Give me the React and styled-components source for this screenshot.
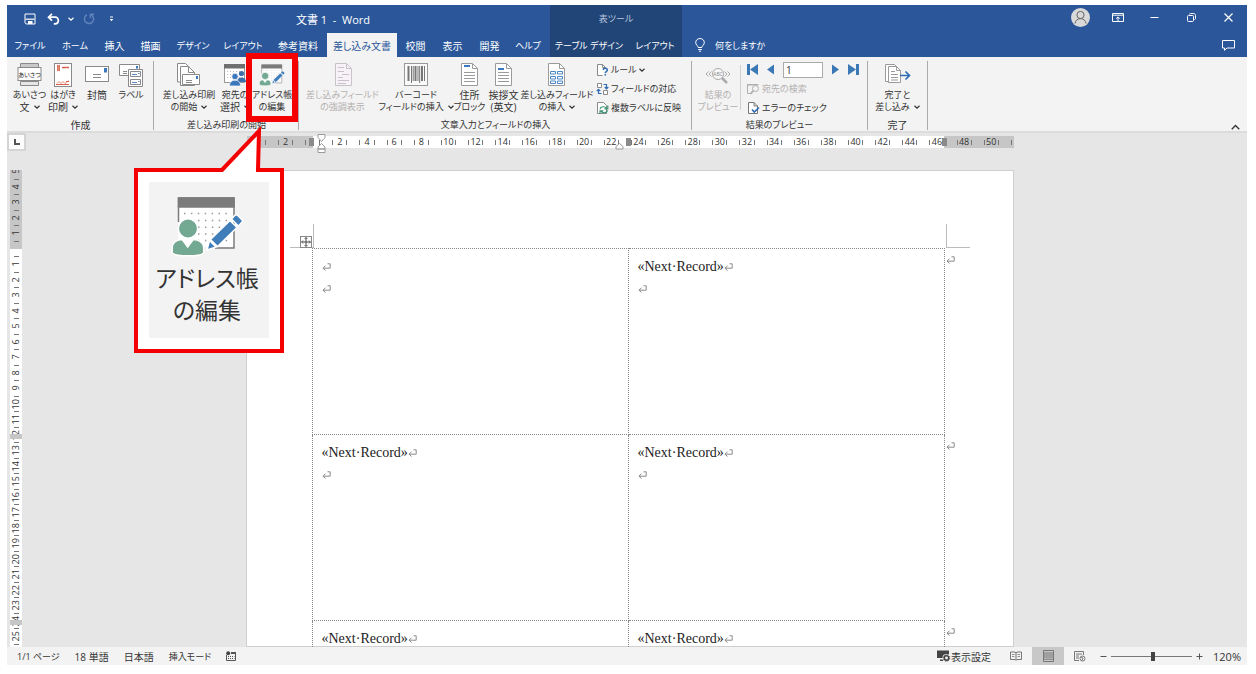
import React from 'react';
import styled, { createGlobalStyle, css } from "styled-components";

const TABS = [
  { name: 'ファイル', width: 46 },
  { name: 'ホーム', width: 44 },
  { name: '挿入', width: 35 },
  { name: '描画', width: 37 },
  { name: 'デザイン', width: 48 },
  { name: 'レイアウト', width: 52 },
  { name: '参考資料', width: 58 },
  { name: '差し込み文書', width: 70 },
  { name: '校閲', width: 37 },
  { name: '表示', width: 37 },
  { name: '開発', width: 37 },
  { name: 'ヘルプ', width: 40 },
];

const RULER_NUMBERS = [2, '', 2, 4, 6, 8, 10, 12, 14, 16, 18, 20, 22, 24, 26, 28, 30, 32, 34, 36, 38, 40, 42, 44, 46, 48, 50];
const SIDE_NUMBERS = [5, 4, 3, 2, 1, '', 1, 2, 3, 4, 5, 6, 7, 8, 9, 10, 11, 12, 13, 14, 15, 16, 17, 18, 19, 20, 21, 22, 23, 24, 25];

const LABEL_ROWS = [
  [false, true],
  [true, true],
  [true, true],
];

// labels with kana are set one step smaller than kanji-only ones
const hasKana = (text) => /[ぁ-ヶー]/.test(text);

export default function App(){

  const [tab, setTab] = React.useState('差し込み文書');
  const [record, setRecord] = React.useState('1');
  const [zoom, setZoom] = React.useState(120);

  return(
    <Window>
      <GlobalStyle/>
      <Header>
        <MainHead>
          <TitleRow>
            <QuickAccess>
              <IconBtn aria-label="上書き保存" $width={23}><SaveIcon/></IconBtn>
              <IconBtn aria-label="元に戻す" $width={24}><UndoIcon/></IconBtn>
              <IconBtn aria-label="元に戻す一覧" $width={12}><Chevron/></IconBtn>
              <IconBtn aria-label="繰り返し" $width={23}><RedoIcon/></IconBtn>
              <IconBtn aria-label="クイック アクセスのカスタマイズ" $width={23}><CustomizeIcon/></IconBtn>
            </QuickAccess>
            <Title>文書 1 &nbsp;-&nbsp; Word</Title>
          </TitleRow>
          <TabRow>
            {TABS.map(({name, width}) => (
              <Tab key={name} $width={width} $kana={hasKana(name) && tab !== name} $active={tab === name} onClick={() => setTab(name)}>{name}</Tab>
            ))}
          </TabRow>
        </MainHead>
        <ContextHead>
          <ContextTitle>表ツール</ContextTitle>
          <ContextTabs>
            <Tab $width={78} $kana>テーブル デザイン</Tab>
            <Tab $width={54} $kana>レイアウト</Tab>
          </ContextTabs>
        </ContextHead>
        <EndHead>
          <WindowControls>
            <IconBtn aria-label="アカウント" $width={37}><AvatarIcon/></IconBtn>
            <IconBtn aria-label="リボンの表示オプション" $width={37}><RibbonOptionIcon/></IconBtn>
            <IconBtn aria-label="最小化" $width={37}><MinimizeIcon/></IconBtn>
            <IconBtn aria-label="元に戻す (縮小)" $width={37}><RestoreIcon/></IconBtn>
            <IconBtn aria-label="閉じる" $width={37}><CloseIcon/></IconBtn>
          </WindowControls>
          <HelpRow>
            <TellMe><BulbIcon/>何をしますか</TellMe>
            <IconBtn aria-label="コメント" $width={37}><CommentIcon/></IconBtn>
          </HelpRow>
        </EndHead>
      </Header>

      <Ribbon>
        <Group name="作成" $width={147} $pad={6}>
          <BigButton width={33} icon={<GreetingIcon/>} lines={['あいさつ', '文']} menu/>
          <BigButton width={34} icon={<PostcardIcon/>} lines={['はがき', '印刷']} menu/>
          <BigButton width={34} icon={<EnvelopeIcon/>} lines={['封筒']}/>
          <BigButton width={34} icon={<LabelIcon/>} lines={['ラベル']}/>
        </Group>
        <Group name="差し込み印刷の開始" $width={145} $pad={6}>
          <BigButton width={58} icon={<MergeStartIcon/>} lines={['差し込み印刷', 'の開始']} menu/>
          <BigButton width={34} icon={<RecipientsIcon/>} lines={['宛先の', '選択']} menu/>
          <Marked>
            <BigButton width={40} icon={<AddressBookIcon size={26}/>} lines={['アドレス帳', 'の編集']}/>
          </Marked>
        </Group>
        <Group name="文章入力とフィールドの挿入" $width={393} $pad={6}>
          <BigButton width={75} icon={<HighlightIcon/>} lines={['差し込みフィールド', 'の強調表示']} disabled/>
          <BigButton width={72} icon={<BarcodeIcon/>} lines={['バーコード', 'フィールドの挿入']} menu/>
          <BigButton width={35} icon={<AddressBlockIcon top={1}/>} lines={['住所', 'ブロック']}/>
          <BigButton width={33} icon={<AddressBlockIcon top={4}/>} lines={['挨拶文', '(英文)']}/>
          <BigButton width={74} icon={<InsertFieldIcon/>} lines={['差し込みフィールド', 'の挿入']} menu/>
          <Stack>
            <SmallButton><RuleIcon/>ルール<Chevron/></SmallButton>
            <SmallButton><MatchIcon/>フィールドの対応</SmallButton>
            <SmallButton><UpdateIcon/>複数ラベルに反映</SmallButton>
          </Stack>
        </Group>
        <Group name="結果のプレビュー" $width={176} $pad={5}>
          <BigButton width={42} icon={<PreviewIcon/>} lines={['結果の', 'プレビュー']} disabled/>
          <Divider/>
          <Stack>
            <RecordNav>
              <button aria-label="最初のレコード"><NavIcon kind="first"/></button>
              <button aria-label="前のレコード"><NavIcon kind="prev"/></button>
              <RecordInput aria-label="レコード" value={record} onChange={(e) => setRecord(e.target.value)}/>
              <button aria-label="次のレコード"><NavIcon kind="next"/></button>
              <button aria-label="最後のレコード"><NavIcon kind="last"/></button>
            </RecordNav>
            <SmallButton disabled><FindIcon/>宛先の検索</SmallButton>
            <SmallButton><CheckIcon/>エラーのチェック</SmallButton>
          </Stack>
        </Group>
        <Group name="完了" $width={60} $pad={5}>
          <BigButton width={49} icon={<FinishIcon/>} lines={['完了と', '差し込み']} menu/>
        </Group>
        <CollapseBtn aria-label="リボンを折りたたむ"><Chevron up large/></CollapseBtn>
      </Ribbon>

      <RulerRow>
        <TabSelector aria-label="タブの種類"><TabStopIcon/></TabSelector>
        <RulerTrack>
          <Ruler>
            {RULER_NUMBERS.map((n, i) => <RulerCell key={i}>{n}</RulerCell>)}
            <RulerTick $left={18}/>
            <RulerTick $left={764}/>
            <ColumnMark $left={62}/>
            <ColumnMark $left={379}/>
            <ColumnMark $left={695}/>
            <IndentMark $left={70}><IndentIcon/></IndentMark>
            <IndentMark $left={368}><RightIndentIcon/></IndentMark>
          </Ruler>
        </RulerTrack>
      </RulerRow>

      <Workspace>
        <SideRuler>
          <SideNumbers>
            {SIDE_NUMBERS.map((n, i) => <SideCell key={i}><span>{n}</span></SideCell>)}
          </SideNumbers>
          <RowMark $top={264}/>
          <RowMark $top={450}/>
        </SideRuler>
        <Canvas>
          <Paper>
            <CropLeft/>
            <CropRight/>
            <MoveHandle aria-label="表の移動ハンドル"><MoveIcon/></MoveHandle>
            <LabelTable>
              <tbody>
                {LABEL_ROWS.map((row, i) => (
                  <tr key={i}>
                    {row.map((next, j) => (
                      <LabelCell key={j}>
                        <Line>{next && '«Next·Record»'}<ReturnIcon/></Line>
                        <Line><ReturnIcon/></Line>
                      </LabelCell>
                    ))}
                    <EndCell><ReturnIcon/></EndCell>
                  </tr>
                ))}
              </tbody>
            </LabelTable>
          </Paper>
        </Canvas>
      </Workspace>

      <StatusBar>
        <StatusGroup>
          <StatusBtn $kana>1/1 ページ</StatusBtn>
          <StatusBtn>18 単語</StatusBtn>
          <StatusBtn>日本語</StatusBtn>
          <StatusBtn $kana>挿入モード</StatusBtn>
          <StatusBtn aria-label="マクロの記録"><MacroIcon/></StatusBtn>
        </StatusGroup>
        <ViewGroup>
          <DisplayBtn><DisplayIcon/>表示設定</DisplayBtn>
          <ViewBtn aria-label="閲覧モード"><ReadIcon/></ViewBtn>
          <ViewBtn aria-label="印刷レイアウト" $active><PrintIcon/></ViewBtn>
          <ViewBtn aria-label="Web レイアウト"><WebIcon/></ViewBtn>
          <ZoomBtn aria-label="縮小" onClick={() => setZoom(zoom - 10)}><ZoomSign/></ZoomBtn>
          <ZoomSlider aria-label="ズーム" min="10" max="220" value={zoom} onChange={(e) => setZoom(Number(e.target.value))}/>
          <ZoomBtn aria-label="拡大" onClick={() => setZoom(zoom + 10)}><ZoomSign plus/></ZoomBtn>
          <ZoomValue>{zoom}%</ZoomValue>
        </ViewGroup>
      </StatusBar>

      <Callout>
        <CalloutPointer/>
        <CalloutPanel>
          <AddressBookIcon size={72}/>
          <div>アドレス帳<br/>の編集</div>
        </CalloutPanel>
      </Callout>
    </Window>
  )
}

function Group({name, children, ...rest}){
  return(
    <GroupBox {...rest}>
      <GroupBody>{children}</GroupBody>
      <GroupName $kana={hasKana(name)}>{name}</GroupName>
    </GroupBox>
  )
}

function BigButton({width, icon, lines, menu, disabled}){
  return(
    <BigBtn $width={width} disabled={disabled}>
      <IconBox>{icon}</IconBox>
      {lines.map((line, i) => (
        <BtnLine key={line} $kana={hasKana(line)}>{line}{menu && i === lines.length - 1 && <Chevron/>}</BtnLine>
      ))}
    </BigBtn>
  )
}

/* icons */

function Chevron({up, large}){
  return(
    <svg width={large ? 9 : 6} height={large ? 6 : 4} viewBox="0 0 6 4" fill="none" stroke="currentColor" strokeWidth={large ? 0.9 : 1.2}>
      <path d={up ? "M0.5 3.5 3 1 5.5 3.5" : "M0.5 0.7 3 3.1 5.5 0.7"}/>
    </svg>
  )
}

function SaveIcon(){
  return(
    <svg width="12" height="12" viewBox="0 0 12 12" fill="none" stroke="#fff">
      <path d="M1 1h10v10H2.2L1 9.8z"/>
      <path d="M1.5 6.2h9" strokeWidth="1.2"/>
      <path d="M4 8h4.5v3H4z" fill="#fff" stroke="none"/>
    </svg>
  )
}

function UndoIcon(){
  return(
    <svg width="13" height="12" viewBox="0 0 13 12" fill="none" stroke="#fff" strokeWidth="1.7">
      <path d="M5 0.8 1.5 4.2 5 7.6"/>
      <path d="M1.8 4.2h6.4c4.2 0 4.2 6.3 0 6.6H6.8"/>
    </svg>
  )
}

function RedoIcon(){
  return(
    <svg width="12" height="12" viewBox="0 0 12 12" fill="none" stroke="#5f82bb" strokeWidth="1.5">
      <path d="M4 1.8A4.6 4.6 0 1 0 8.2 1.9"/>
      <path d="M7.4 5V1.2h3.8"/>
    </svg>
  )
}

function CustomizeIcon(){
  return(
    <svg width="5" height="6" viewBox="0 0 5 6" fill="#fff">
      <path d="M1 0.5h3v1H1zM0.7 3h3.6L2.5 5.2z"/>
    </svg>
  )
}

function AvatarIcon(){
  return(
    <svg width="19" height="19" viewBox="0 0 19 19" fill="none" stroke="#666">
      <circle cx="9.5" cy="9.5" r="9.5" fill="#d9d9d9" stroke="none"/>
      <circle cx="9.5" cy="7" r="3.6"/>
      <path d="M4 15.5c.4-3 2.6-4.9 5.5-4.9s5.1 1.900 5.500 4.900"/>
    </svg>
  )
}

function RibbonOptionIcon(){
  return(
    <svg width="12" height="9" viewBox="0 0 12 9" fill="none" stroke="#fff">
      <path d="M0.5 0.5h11v8H0.5zM0.5 2.2h11"/>
      <path d="M6 8V4M4.2 5.7 6 3.9l1.8 1.8"/>
    </svg>
  )
}

function MinimizeIcon(){
  return <svg width="9" height="9" viewBox="0 0 9 9"><path d="M0.5 4.5h8" stroke="#fff"/></svg>
}

function RestoreIcon(){
  return(
    <svg width="9" height="9" viewBox="0 0 9 9" fill="none" stroke="#fff">
      <rect x="0.5" y="2.5" width="6" height="6" rx="1"/>
      <path d="M2.5 1.5c0-.7.4-1 1-1h3c1.3 0 2 .7 2 2v3c0 .6-.3 1-1 1"/>
    </svg>
  )
}

function CloseIcon(){
  return <svg width="9" height="9" viewBox="0 0 9 9"><path d="M0.5 0.5l8 8M8.5 0.5l-8 8" stroke="#fff" strokeWidth="1.2"/></svg>
}

function BulbIcon(){
  return(
    <svg width="10" height="14" viewBox="0 0 10 14" fill="none" stroke="#fff">
      <path d="M3.2 9.5C3.2 7.5.7 7.2.7 4.5a4.3 4 0 0 1 8.6 0c0 2.7-2.5 3-2.5 5z"/>
      <path d="M3.2 11.5h3.6M4 13.2h2"/>
    </svg>
  )
}

function CommentIcon(){
  return(
    <svg width="13" height="11" viewBox="0 0 13 11" fill="none" stroke="#fff">
      <path d="M0.5 0.5h12V8H5l-2.5 2.3V8h-2z"/>
    </svg>
  )
}

function GreetingIcon(){
  return(
    <svg width="26" height="26" viewBox="0 0 26 26">
      <path d="M3.5 1.5h18v4h-18z" fill="#c9c9c9" stroke="#8a8a8a"/>
      <path d="M3.5 19.5h18v4h-18z" fill="#e6e6e6" stroke="#8a8a8a"/>
      <rect x="1" y="5.5" width="23" height="13" fill="#fff" stroke="#8a8a8a"/>
      <text x="12.5" y="14.5" fontSize="6" textAnchor="middle" fill="#222">あいさつ</text>
    </svg>
  )
}

function PostcardIcon(){
  return(
    <svg width="26" height="26" viewBox="0 0 26 26" fill="none">
      <rect x="4.5" y="1.5" width="17" height="23" fill="#fff" stroke="#8a8a8a"/>
      <path d="M7 3l3 2-3 2 3 2M10 3L7 5l3 2-3 2" stroke="#d8604a"/>
      <path d="M12 5.5h7" stroke="#d8604a" strokeWidth="1.5"/>
      <path d="M7 21.500l2-2 2 2 2-2 2 2 3.500-3" stroke="#e8836f"/>
      <path d="M6 22.500h13M16 19.500h3" stroke="#d8604a"/>
    </svg>
  )
}

function EnvelopeIcon(){
  return(
    <svg width="26" height="26" viewBox="0 0 26 26" fill="none">
      <rect x="1.5" y="4.5" width="23" height="15" fill="#fff" stroke="#8a8a8a"/>
      <path d="M20 6h3v4.500h-3z" fill="#3b78bd"/>
      <path d="M9 12.500h8M9 15.500h8" stroke="#8a8a8a"/>
    </svg>
  )
}

function LabelIcon(){
  return(
    <svg width="26" height="26" viewBox="0 0 26 26" fill="none" stroke="#8a8a8a">
      <path d="M1.500 2.500h20v11h-20z" fill="#fff"/>
      <path d="M18 4h2v2.500h-2z" fill="#3b78bd" stroke="none"/>
      <path d="M5 9.500h4M5 11.500h4"/>
      <path d="M10.500 7.500h14v17h-14z" fill="#fff"/>
      <path d="M12.500 9.500h10v5h-10zM12.500 17.500h10v5h-10z" fill="#fff"/>
      <path d="M14 12.500h5M14 20.500h5M20 11.500h1.500M20 19.500h1.500" stroke="#5b8fc9"/>
    </svg>
  )
}

function MergeStartIcon(){
  return(
    <svg width="26" height="26" viewBox="0 0 26 26" fill="none" stroke="#8a8a8a">
      <path d="M1.500 1.500h8l5 5V20h-13z" fill="#fff"/>
      <path d="M4.500 4.500h8l6 6v13h-14z" fill="#fff"/>
      <path d="M12.500 4.500v6h6"/>
      <path d="M6.500 12.500h17v10h-17z" fill="#fff"/>
      <path d="M20 14h2v3h-2z" fill="#3b78bd" stroke="none"/>
      <path d="M10 18.500h6M10 20.500h6"/>
    </svg>
  )
}

function RecipientsIcon(){
  return(
    <svg width="26" height="26" viewBox="0 0 26 26" fill="none">
      <rect x="2.500" y="2.500" width="20" height="18" fill="#fff" stroke="#9a9a9a"/>
      <path d="M2 2h21v4.500H2z" fill="#6f6f6f"/>
      <path d="M5 9.500h16M5 12.500h16M5 15.500h16" stroke="#bbb" strokeDasharray="1 2"/>
      <circle cx="19.500" cy="11.500" r="2.600" fill="#3d6fa8"/>
      <path d="M15 20c0-3 2-4.500 4.500-4.500S24 17 24 20z" fill="#3d6fa8"/>
      <g fill="#3b78bd" stroke="#f3f3f3" strokeWidth=".8">
        <circle cx="13" cy="14.500" r="3.200"/>
        <path d="M7.500 24c0-4 2.500-5.800 5.500-5.800s5.500 1.800 5.500 5.800z"/>
      </g>
    </svg>
  )
}

function AddressBookIcon({size}){
  return(
    <svg width={size} height={size} viewBox="0 0 72 72" fill="none">
      <path d="M7.5 8h56v49h-56z" fill="#fff"/>
      <path d="M7.5 32V8H63v50H44" stroke="#7b7b7b" strokeWidth="1.5"/>
      <path d="M6.800 7.200h57v10.500h-57z" fill="#7b7b7b"/>
      <path d="M13 23.500h46M27 30.500h32M27 37.300h32M27 44h32M27 50.500h32" stroke="#9a9a9a" strokeWidth="1.500" strokeDasharray="1.500 5.400"/>
      <g fill="#73a892" stroke="#fff" strokeWidth="1.500">
        <circle cx="17" cy="38.500" r="9.700"/>
        <path d="M1.200 63V58c0-5.500 4.500-8.500 10-8.500l5.500 7.500 5.500-7.500c5.500 0 10.500 3 10.500 8.500v5c-4 3.800-27 3.800-31.500 0z"/>
      </g>
      <g fill="#417db8" stroke="#fff" strokeWidth="1.500">
        <path d="M36 60l2.500-9.500 6.500 6.500z"/>
        <path d="M39.500 49.500 59 30.500l7 7-19.500 19z"/>
        <path d="M60.500 29l3.200-3.500c1-1 2-1 3 0l4 4c1 1 1 2 0 3L67.300 36z"/>
      </g>
    </svg>
  )
}

function HighlightIcon(){
  return(
    <svg width="26" height="26" viewBox="0 0 26 26" fill="none" stroke="#c9c2c9">
      <path d="M5.500 1.500h11l5 5v17h-16z" fill="#f7f2f7"/>
      <path d="M16.500 1.500v5h5M8 5.500h6M8 9.500h6M12 12.500h7M8 15.500h5M8 18.500h11M8 21.500h8"/>
    </svg>
  )
}

function BarcodeIcon(){
  return(
    <svg width="26" height="26" viewBox="0 0 26 26" fill="none" stroke="#777">
      <rect x="1.500" y="1.500" width="23" height="22" fill="#fafafa" stroke="#999"/>
      <path d="M5.500 4v15M12.500 4v15M19 4v15" strokeWidth="2"/>
      <path d="M8.500 4v17M10.200 4v15M15 4v15M16.700 4v17M21.500 4v15"/>
    </svg>
  )
}

function AddressBlockIcon({top}){
  return(
    <svg width="26" height="26" viewBox="0 0 26 26" fill="none" stroke="#9a9a9a">
      <path d="M4.500 1.500h11l5 5v17h-16z" fill="#fff"/>
      <path d="M15.500 1.500v5h5M7 10.500h11M7 13.500h11M7 16.500h11M7 19.500h11"/>
      <path d={`M7 ${top + 3}h6`} stroke="#3b78bd" strokeWidth="2"/>
    </svg>
  )
}

function InsertFieldIcon(){
  return(
    <svg width="26" height="26" viewBox="0 0 26 26" fill="none" stroke="#9a9a9a">
      <path d="M4.500 1.500h11l5 5v17h-16z" fill="#fff"/>
      <path d="M15.500 1.500v5h5"/>
      <path d="M6.500 9.500h5v2.500h-5zM13.500 9.500h5v2.500h-5zM6.500 14.500h5V17h-5zM13.500 14.500h5V17h-5zM6.500 19h5v2.500h-5zM13.500 19h5v2.500h-5z" stroke="#4a86c5"/>
    </svg>
  )
}

function RuleIcon(){
  return(
    <svg width="13" height="14" viewBox="0 0 13 14" fill="none" stroke="#8a8a8a">
      <path d="M6.500 12.500h-5V1.500h5l3 3" fill="#fff"/>
      <path d="M6.500 1.500v3h3"/>
      <path d="M7.300 7c0-2.400 4-2.200 4 0 0 1.600-2 1.600-2 3M9.300 11v1.600" stroke="#2f6db5" strokeWidth="1.500"/>
    </svg>
  )
}

function MatchIcon(){
  return(
    <svg width="13" height="14" viewBox="0 0 13 14" fill="none" stroke="#8a8a8a">
      <path d="M1.500 1.500h4v4h-4zM7.500 8.500h4v4h-4z" fill="#fff"/>
      <path d="M7.500 2.500h3v4M8.700 5l1.800 1.800L12.300 5M5.500 11.500h-3v-4M.7 9.200l1.800-1.800 1.800 1.800" stroke="#2f6db5" strokeWidth="1.200"/>
    </svg>
  )
}

function UpdateIcon(){
  return(
    <svg width="13" height="14" viewBox="0 0 13 14" fill="none" stroke="#8a8a8a">
      <path d="M1.500 1.500h6l3 3v8h-9z" fill="#fff"/>
      <path d="M4 8.200c.5-3 5-3.200 6.500-.8M11.800 4.500v3.300H8.500M11.500 9.500c-.8 2.800-5 3-6.500.6M4 13V9.800h3.300" stroke="#3f9270" strokeWidth="1.200"/>
    </svg>
  )
}

function PreviewIcon(){
  return(
    <svg width="26" height="26" viewBox="0 0 26 26" fill="none" stroke="#aaa">
      <circle cx="13" cy="12" r="5.500" fill="#f7f7f7"/>
      <path d="M17 16l5 5" strokeWidth="2.500"/>
      <path d="M3.500 9.500 1 12l2.500 2.500M6.500 9.500 4 12l2.500 2.500M19.500 9.500 22 12l-2.500 2.500M22.500 9.500 25 12l-2.500 2.500"/>
      <text x="13" y="14" fontSize="5" textAnchor="middle" fill="#888" stroke="none">ABC</text>
    </svg>
  )
}

function NavIcon({kind}){
  const paths = {
    first: "M0 0h3v11H0zM11 0v11L3 5.5z",
    prev: "M9 0.5v10L2 5.5z",
    next: "M2 0.5v10L9 5.5z",
    last: "M0 0l8 5.5L0 11zM8 0h3v11H8z",
  };
  return <svg width="11" height="11" viewBox="0 0 11 11" fill="#3b78b5"><path d={paths[kind]}/></svg>
}

function FindIcon(){
  return(
    <svg width="13" height="14" viewBox="0 0 13 14" fill="none" stroke="#b0b0b0">
      <path d="M4 11.500H0.500v-9h11"/>
      <path d="M0 2h11v1.500H0z" fill="#b0b0b0" stroke="none"/>
      <circle cx="8.500" cy="6.500" r="3"/>
      <path d="M6.300 8.700 3.500 12" strokeWidth="1.800"/>
    </svg>
  )
}

function CheckIcon(){
  return(
    <svg width="13" height="14" viewBox="0 0 13 14" fill="none" stroke="#777">
      <path d="M1.500 1.500H7L10.500 5v7.500h-9z" fill="#fff"/>
      <path d="M7 1.500V5h3.500"/>
      <path d="M5 8.500 7.300 11 12 6.500" stroke="#2f6db5" strokeWidth="1.700"/>
    </svg>
  )
}

function FinishIcon(){
  return(
    <svg width="26" height="26" viewBox="0 0 26 26" fill="none" stroke="#9a9a9a">
      <path d="M0.500 2.500h9l4 4v13h-13z" fill="#fff"/>
      <path d="M3.500 4.500h8l4 4v12h-12z" fill="#fff"/>
      <path d="M11.500 4.500v4h4M6 9.500h4M6 12.500h7M6 15.500h7M6 18h7"/>
      <path d="M15 13.500h9.500M20.500 9.500l4 4-4 4" stroke="#2f6db5" strokeWidth="1.700"/>
    </svg>
  )
}

function TabStopIcon(){
  return <svg width="6" height="6" viewBox="0 0 6 6"><path d="M1 0v5h5" fill="none" stroke="#555" strokeWidth="2"/></svg>
}

function IndentIcon(){
  return(
    <svg width="9" height="20" viewBox="0 0 9 20" fill="#fff" stroke="#999">
      <path d="M1 .5h7v3L4.500 7.500 1 3.500z"/>
      <path d="M4.500 9.500 8 13v2H1v-2zM1 15h7v3.500H1z"/>
    </svg>
  )
}

function RightIndentIcon(){
  return(
    <svg width="9" height="20" viewBox="0 0 9 20" fill="#fff" stroke="#999">
      <path d="M4.500 9.500 8 12.500V15H1v-2.500z"/>
    </svg>
  )
}

function MoveIcon(){
  return(
    <svg width="10" height="10" viewBox="0 0 10 10" fill="none" stroke="#444">
      <path d="M5 .5v9M.5 5h9"/>
      <path d="M3.500 2 5 .5 6.500 2M3.500 8 5 9.500 6.500 8M2 3.500.5 5 2 6.500M8 3.500 9.500 5 8 6.500" strokeWidth=".8"/>
    </svg>
  )
}

function ReturnIcon(){
  return(
    <svg width="9" height="8" viewBox="0 0 9 8" fill="none" stroke="#8a8a8a">
      <path d="M5.500 .8h2.700v4.400H1M3.500 2.700 1 5.200l2.500 2.300"/>
    </svg>
  )
}

function MacroIcon(){
  return(
    <svg width="10" height="10" viewBox="0 0 10 10" fill="none" stroke="#555">
      <path d="M.5 4v5.500h9V1.500h-4"/>
      <path d="M5 1h5v2H5z" fill="#555" stroke="none"/>
      <circle cx="2.200" cy="2.200" r="2" fill="#444" stroke="none"/>
      <path d="M2 5.500h6.500M2 7.500h6.500" strokeDasharray="1 1"/>
    </svg>
  )
}

function DisplayIcon(){
  return(
    <svg width="14" height="12" viewBox="0 0 14 12" fill="none">
      <path d="M0 .5h12V8H0zM3 9.500h3.500V11H3z" fill="#444"/>
      <circle cx="9.500" cy="8" r="4" fill="#f3f3f3"/>
      <circle cx="9.500" cy="8" r="2.200" stroke="#444" strokeWidth="1.500"/>
      <circle cx="9.500" cy="8" r="3.200" stroke="#444" strokeDasharray="1.300 1.200"/>
    </svg>
  )
}

function ReadIcon(){
  return(
    <svg width="12" height="10" viewBox="0 0 12 10" fill="none" stroke="#777">
      <path d="M.5 1H5l1 1 1-1h4.500v7.500H7l-1 1-1-1H.5zM6 2v7"/>
      <path d="M2 3.500h2.500M2 5.500h2.500M7.500 3.500H10M7.500 5.500H10" strokeWidth=".8"/>
    </svg>
  )
}

function PrintIcon(){
  return(
    <svg width="11" height="12" viewBox="0 0 11 12" fill="none" stroke="#777">
      <path d="M.5.5h10v11H.5zM1 3h9M1 5h9M1 7h9M1 9.200h9"/>
    </svg>
  )
}

function WebIcon(){
  return(
    <svg width="12" height="11" viewBox="0 0 12 11" fill="none" stroke="#777">
      <path d="M5 9.500H.5v-9h9V4M2 3h6M2 5h3M2 7h3"/>
      <circle cx="8.500" cy="7.500" r="2.500"/>
      <path d="M7 6l2 1-1 2.500"/>
    </svg>
  )
}

function ZoomSign({plus}){
  return(
    <svg width="7" height="7" viewBox="0 0 7 7" stroke="#555">
      <path d={plus ? "M.5 3.500h6M3.500 .5v6" : "M.5 3.500h6"}/>
    </svg>
  )
}

function CalloutPointer(){
  return(
    <PointerSvg width="52" height="48" viewBox="0 0 52 48">
      <path d="M7 48v-4L44 5l-1 39v4z" fill="#fff"/>
      <path d="M2 44h5L44 5l-1 39h7" fill="none" stroke="#f50000" strokeWidth="4"/>
    </PointerSvg>
  )
}

/* styles */

const GlobalStyle = createGlobalStyle`
  *, *::before, *::after {
    box-sizing: border-box;
  }
  body {
    margin: 0;
    background: #fff;
    font-family: "Open Sans", "Noto Sans CJK JP", sans-serif;
    font-size: 10px;
    color: #333;
  }
  button, input {
    font: inherit;
    color: inherit;
  }
  button {
    padding: 0;
    border: 0;
    background: none;
    white-space: nowrap;
    font-feature-settings: "palt";
  }
  svg {
    display: block;
    flex: none;
  }
`

const Window = styled.div`
  position: relative;
  display: flex;
  flex-direction: column;
  height: 100vh;
  padding: 5px 9px 9px 7px;
  font-feature-settings: "palt";
`

const Header = styled.header`
  display: flex;
  flex: none;
  background: #2b579a;
  color: #fff;
`

const MainHead = styled.div`
  width: 543px;
`

const TitleRow = styled.div`
  display: flex;
  align-items: center;
  height: 28px;
`

const QuickAccess = styled.div`
  display: flex;
  width: 109px;
  padding-left: 11px;
`

const IconBtn = styled.button`
  display: flex;
  align-items: center;
  justify-content: center;
  flex: none;
  width: ${({$width}) => $width}px;
  height: 24px;
`

const Title = styled.div`
  flex: 1;
  text-align: center;
  font-size: 11px;
`

const TabRow = styled.nav`
  display: flex;
  height: 24px;
`

const Tab = styled.button`
  display: flex;
  align-items: center;
  justify-content: center;
  flex: none;
  width: ${({$width}) => $width}px;
  height: 24px;
  font-size: ${({$kana}) => $kana ? 9 : 10}px;
  ${({$active}) => $active && css`
    background: #f3f3f3;
    color: #2b579a;
  `}
`

const ContextHead = styled.div`
  background: #224578;
`

const ContextTitle = styled.div`
  height: 28px;
  line-height: 27px;
  text-align: center;
  font-size: 9px;
  color: #b8c6dc;
`

const ContextTabs = styled.div`
  display: flex;
`

const EndHead = styled.div`
  flex: 1;
`

const WindowControls = styled.div`
  display: flex;
  justify-content: flex-end;
  height: 28px;
`

const HelpRow = styled.div`
  display: flex;
  justify-content: space-between;
  padding-left: 13px;
`

const TellMe = styled.button`
  display: flex;
  align-items: center;
  gap: 10px;
  font-size: 9px;
`

const Ribbon = styled.div`
  display: flex;
  flex: none;
  padding: 4px 0 1px;
  background: #f3f3f3;
`

const GroupBox = styled.section`
  display: flex;
  flex-direction: column;
  width: ${({$width}) => $width}px;
  height: 69px;
  padding-left: ${({$pad}) => $pad}px;
  padding-right: 5px;
  border-right: 1px solid #aaa;
`

const GroupBody = styled.div`
  display: flex;
  height: 59px;
`

const GroupName = styled.div`
  line-height: 10px;
  text-align: center;
  white-space: nowrap;
  font-size: ${({$kana}) => $kana ? 9 : 10}px;
`

const BigBtn = styled.button`
  display: flex;
  flex-direction: column;
  align-items: center;
  flex: none;
  width: ${({$width}) => $width}px;
  line-height: 12px;
  &:disabled {
    color: #b4b0b0;
  }
`

const IconBox = styled.span`
  height: 28px;
  padding-top: 1px;
`

const BtnLine = styled.span`
  display: flex;
  align-items: center;
  gap: 4px;
  font-size: ${({$kana}) => $kana ? 9 : 10}px;
`

const Marked = styled.div`
  position: relative;
  display: flex;
  &::after {
    content: "";
    position: absolute;
    z-index: 2;
    top: -8px;
    left: -6px;
    width: 52px;
    height: 69px;
    border: 6px solid #f50000;
    pointer-events: none;
  }
`

const Stack = styled.div`
  display: flex;
  flex-direction: column;
  gap: 2px;
  padding-left: 2px;
`

const SmallButton = styled.button`
  display: flex;
  align-items: center;
  gap: 2px;
  height: 17px;
  font-size: 9px;
  &:disabled {
    color: #b4b0b0;
  }
`

const Divider = styled.div`
  width: 1px;
  height: 45px;
  margin: 4px 4px 0 1px;
  background: #d0d0d0;
`

const RecordNav = styled.div`
  display: flex;
  align-items: center;
  gap: 7px;
  height: 17px;
`

const RecordInput = styled.input`
  width: 40px;
  height: 16px;
  padding: 0 2px;
  border: 1px solid #aaa;
  background: #fff;
`

const CollapseBtn = styled.button`
  display: flex;
  align-items: flex-end;
  margin-left: auto;
  padding: 0 7px 0;
`

const RulerRow = styled.div`
  display: flex;
  flex: none;
  height: 20px;
  border-top: 2px solid #dcdcdc;
  background: #e6e6e6;
`

const TabSelector = styled.button`
  display: flex;
  align-items: center;
  justify-content: center;
  flex: none;
  width: 19px;
  height: 18px;
  border: 2px solid #d4d4d4;
  background: #fdfdfd;
`

const RulerTrack = styled.div`
  display: flex;
  justify-content: center;
  flex: 1;
  padding: 3px 12px 0 0;
`

const Ruler = styled.div`
  position: relative;
  display: flex;
  width: 767px;
  height: 12px;
  padding: 0 9px 0 25px;
  background: linear-gradient(to right, #c6c6c6 66px, #fff 66px, #fff 697px, #c6c6c6 697px);
`

const RulerCell = styled.span`
  display: flex;
  align-items: center;
  justify-content: center;
  flex: 1;
  font-size: 9px;
  line-height: 12px;
  &::before, &::after {
    content: "";
    width: 1px;
    height: 5px;
    background: #777;
  }
  &::before {
    margin-right: auto;
    margin-left: 6px;
  }
  &::after {
    margin-left: auto;
    margin-right: 6px;
  }
`

const RulerTick = styled.span`
  position: absolute;
  top: 4px;
  left: ${({$left}) => $left}px;
  width: 1px;
  height: 5px;
  background: #777;
`

const ColumnMark = styled.span`
  position: absolute;
  top: 2px;
  left: ${({$left}) => $left}px;
  width: 5px;
  height: 8px;
  background: #8a8a8a;
`

const IndentMark = styled.span`
  position: absolute;
  top: -2px;
  left: ${({$left}) => $left}px;
`

const Workspace = styled.main`
  display: flex;
  flex: 1;
  min-height: 0;
  padding-top: 19px;
  overflow: hidden;
  background: #e6e6e6;
`

const SideRuler = styled.div`
  position: relative;
  flex: none;
  width: 12px;
  margin-left: 3px;
  overflow: hidden;
  background: linear-gradient(#c6c6c6 79px, #fff 79px);
`

const SideNumbers = styled.div`
  display: flex;
  flex-direction: column;
  height: 481px;
  margin-top: -6px;
`

const SideCell = styled.div`
  display: flex;
  flex-direction: column;
  align-items: center;
  flex: 1;
  font-size: 9px;
  line-height: 12px;
  span {
    display: flex;
    align-items: center;
    justify-content: center;
    flex: 1;
    min-height: 0;
    writing-mode: vertical-rl;
    transform: rotate(180deg);
  }
  &::after {
    content: "";
    width: 5px;
    height: 1px;
    background: #777;
  }
`

const RowMark = styled.span`
  position: absolute;
  top: ${({$top}) => $top}px;
  left: 0;
  width: 12px;
  height: 5px;
  background: #c6c6c6;
`

const Canvas = styled.div`
  display: flex;
  justify-content: center;
  flex: 1;
  padding-right: 10px;
`

const Paper = styled.article`
  position: relative;
  width: 768px;
  padding: 77px 40px 0 65px;
  border: 1px solid #cfcfcf;
  background: #fff;
`

const CropLeft = styled.span`
  position: absolute;
  top: 53px;
  left: 43px;
  width: 24px;
  height: 24px;
  border-right: 1px solid #bbb;
  border-bottom: 1px solid #bbb;
`

const CropRight = styled.span`
  position: absolute;
  top: 53px;
  left: 699px;
  width: 24px;
  height: 24px;
  border-left: 1px solid #bbb;
  border-bottom: 1px solid #bbb;
`

const MoveHandle = styled.button`
  position: absolute;
  top: 65px;
  left: 53px;
  display: flex;
  align-items: center;
  justify-content: center;
  width: 12px;
  height: 12px;
  border: 1px solid #888;
  background: #fff;
`

const LabelTable = styled.table`
  width: 650px;
  border-collapse: collapse;
  table-layout: fixed;
  font-family: "Liberation Serif", "Noto Sans CJK JP", serif;
  font-size: 14px;
  color: #222;
`

const LabelCell = styled.td`
  width: 316px;
  height: 186px;
  padding: 7px 9px;
  border: 1px dotted #888;
  vertical-align: top;
`

const Line = styled.div`
  display: flex;
  align-items: center;
  height: 22px;
`

const EndCell = styled.td`
  padding: 7px 1px;
  vertical-align: top;
`

const StatusBar = styled.footer`
  display: flex;
  justify-content: space-between;
  flex: none;
  height: 18px;
  background: #f3f3f3;
`

const StatusGroup = styled.div`
  display: flex;
  gap: 15px;
  padding-left: 10px;
`

const StatusBtn = styled.button`
  display: flex;
  align-items: center;
  font-size: ${({$kana}) => $kana ? 9 : 10}px;
`

const ViewGroup = styled.div`
  display: flex;
  align-items: center;
`

const DisplayBtn = styled.button`
  display: flex;
  align-items: center;
  margin-right: 9px;
`

const ViewBtn = styled.button`
  display: flex;
  align-items: center;
  justify-content: center;
  width: 32px;
  height: 18px;
  background: ${({$active}) => $active ? '#c8c8c8' : 'none'};
`

const ZoomBtn = styled.button`
  display: flex;
  align-items: center;
  justify-content: center;
  width: 15px;
  height: 18px;
`

const ZoomSlider = styled.input.attrs({
  type: 'range',
})`
  appearance: none;
  width: 81px;
  height: 18px;
  margin: 0;
  background: linear-gradient(#777, #777) center / 100% 1px no-repeat;
  &::-webkit-slider-thumb {
    appearance: none;
    width: 4px;
    height: 9px;
    background: #444;
  }
`

const ZoomValue = styled.span`
  width: 40px;
  padding-right: 6px;
  text-align: right;
  font-size: 11px;
`

const Callout = styled.aside`
  position: absolute;
  z-index: 3;
  top: 168px;
  left: 134px;
  width: 150px;
  padding: 10px 11px 11px;
  border: 4px solid #f50000;
  background: #fff;
`

const PointerSvg = styled.svg`
  position: absolute;
  top: -46px;
  left: 77px;
`

const CalloutPanel = styled.div`
  display: flex;
  flex-direction: column;
  align-items: center;
  height: 156px;
  padding: 8px 4px 0 0;
  background: #f3f3f3;
  font-size: 23px;
  line-height: 32px;
  text-align: center;
  white-space: nowrap;
`
